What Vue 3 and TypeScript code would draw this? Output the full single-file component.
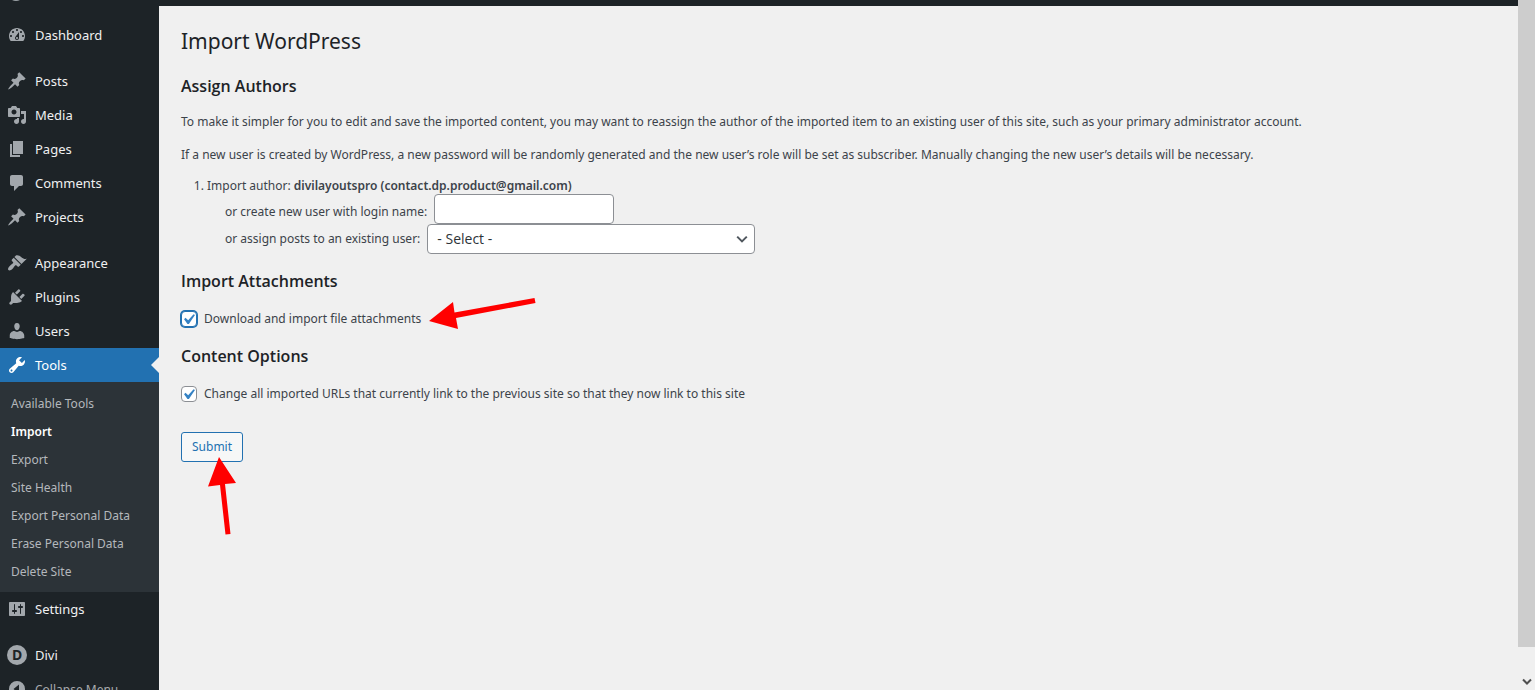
<script setup lang="ts">
import { ref } from 'vue'

interface MenuItem {
  label: string
  path?: string
  letter?: string
  gapBefore?: boolean
  current?: boolean
  children?: string[]
}

const pin =
  'M10.44 3.02l1.82-1.82 6.36 6.35-1.83 1.82c-1.05-.68-2.48-.57-3.41.36l-.75.75c-.92.93-1.04 2.35-.35 3.41l-1.83 1.82-2.41-2.41-2.8 2.79c-.42.42-3.38 2.71-3.8 2.29s1.86-3.39 2.28-3.81l2.79-2.79L4.1 9.36l1.83-1.82c1.05.69 2.48.57 3.4-.36l.75-.75c.93-.92 1.05-2.35.36-3.41z'

const menu: MenuItem[] = [
  {
    label: 'Dashboard',
    path: 'M3.76 16h12.48c1.1-1.37 1.76-3.11 1.76-5 0-4.42-3.58-8-8-8s-8 3.58-8 8c0 1.89.66 3.63 1.76 5zM10 4c.55 0 1 .45 1 1s-.45 1-1 1-1-.45-1-1 .45-1 1-1zM6 6c.55 0 1 .45 1 1s-.45 1-1 1-1-.45-1-1 .45-1 1-1zm8 0c.55 0 1 .45 1 1s-.45 1-1 1-1-.45-1-1 .45-1 1-1zm-5.37 5.55L12 7v6c0 1.1-.9 2-2 2s-2-.9-2-2c0-.57.24-1.08.63-1.45zM4 10c.55 0 1 .45 1 1s-.45 1-1 1-1-.45-1-1 .45-1 1-1zm12 0c.55 0 1 .45 1 1s-.45 1-1 1-1-.45-1-1 .45-1 1-1zm-5 3c0-.55-.45-1-1-1s-1 .45-1 1 .45 1 1 1 1-.45 1-1z',
  },
  { label: 'Posts', path: pin, gapBefore: true },
  {
    label: 'Media',
    path: 'M13 11V4c0-.55-.45-1-1-1h-1.67L9 1H5L3.67 3H2c-.55 0-1 .45-1 1v7c0 .55.45 1 1 1h10c.55 0 1-.45 1-1zM7 4.5c1.38 0 2.5 1.12 2.5 2.5S8.38 9.5 7 9.5 4.5 8.38 4.5 7 5.62 4.5 7 4.5zM14 6h5v10.5c0 1.38-1.12 2.5-2.5 2.5S14 17.88 14 16.5s1.12-2.5 2.5-2.5c.17 0 .34.02.5.05V9h-3V6zm-4 8.05V13h2v3.5c0 1.38-1.12 2.5-2.5 2.5S7 17.88 7 16.5 8.12 14 9.5 14c.17 0 .34.02.5.05z',
  },
  { label: 'Pages', path: 'M6 15V2h10v13H6zm-1 1h8v2H3V5h2v11z' },
  {
    label: 'Comments',
    path: 'M5 2h9c1.1 0 2 .9 2 2v7c0 1.1-.9 2-2 2h-2l-5 5v-5H5c-1.1 0-2-.9-2-2V4c0-1.1.9-2 2-2z',
  },
  { label: 'Projects', path: pin },
  {
    label: 'Appearance',
    gapBefore: true,
    path: 'M14.48 11.06L7.41 3.99l1.5-1.5c.5-.56 2.3-.47 3.51.32 1.21.8 1.43 1.28 2.91 2.1 1.18.64 2.45 1.26 4.45.85zm-.71.71L6.7 4.7 4.93 6.47c-.39.39-.39 1.02 0 1.41l1.06 1.06c.39.39.39 1.03 0 1.42-.6.6-1.43 1.11-2.21 1.69-.35.26-.7.53-1.01.84C1.43 14.23.4 16.08 1.4 17.07c.99 1 2.84-.03 4.18-1.36.31-.31.58-.66.85-1.02.57-.78 1.08-1.61 1.69-2.21.39-.39 1.02-.39 1.41 0l1.06 1.06c.39.39 1.02.39 1.41 0z',
  },
  {
    label: 'Plugins',
    path: 'M13.11 4.36L9.87 7.6 8 5.73l3.24-3.24c.35-.34 1.05-.2 1.56.32.52.51.66 1.21.31 1.55zm-8 1.77l.91-1.12 9.01 9.01-1.19.84c-.71.71-2.63 1.16-3.82 1.16H6.14L4.9 17.26c-.59.59-1.54.59-2.12 0-.59-.58-.59-1.53 0-2.12l1.24-1.24v-3.88c0-1.13.4-3.19 1.09-3.89zm7.26 3.97l3.24-3.24c.34-.35 1.04-.21 1.55.31.52.51.66 1.21.31 1.55l-3.24 3.25z',
  },
  {
    label: 'Users',
    path: 'M10 9.25c-2.27 0-2.73-3.44-2.73-3.44C7 4.02 7.82 2 9.97 2c2.16 0 2.98 2.02 2.71 3.81 0 0-.41 3.44-2.68 3.44zM10 11L12.72 10c2.39 0 4.52 2.33 4.52 4.53v2.49s-3.65 1.13-7.24 1.13c-3.65 0-7.24-1.13-7.24-1.13v-2.49c0-2.25 1.94-4.48 4.47-4.48z',
  },
  {
    label: 'Tools',
    current: true,
    path: 'M16.68 9.77c-1.34 1.34-3.3 1.67-4.95.99l-5.41 6.52c-.99.99-2.59.99-3.58 0s-.99-2.59 0-3.57l6.52-5.42c-.68-1.65-.35-3.61.99-4.95 1.28-1.28 3.12-1.62 4.72-1.06l-2.89 2.89 2.82 2.82 2.86-2.87c.53 1.58.18 3.39-1.08 4.65zM3.81 16.21c.4.39 1.04.39 1.43 0 .4-.4.4-1.04 0-1.43-.39-.4-1.03-.4-1.43 0-.39.39-.39 1.03 0 1.43z',
    children: [
      'Available Tools',
      'Import',
      'Export',
      'Site Health',
      'Export Personal Data',
      'Erase Personal Data',
      'Delete Site',
    ],
  },
  {
    label: 'Settings',
    path: 'M18 16V4c0-.55-.45-1-1-1H3c-.55 0-1 .45-1 1v12c0 .55.45 1 1 1h14c.55 0 1-.45 1-1zM8 11h1c.55 0 1 .45 1 1s-.45 1-1 1H8v1.5c0 .28-.22.5-.5.5s-.5-.22-.5-.5V13H6c-.55 0-1-.45-1-1s.45-1 1-1h1V5.5c0-.28.22-.5.5-.5s.5.22.5.5V11zm5-2h-1c-.55 0-1-.45-1-1s.45-1 1-1h1V5.5c0-.28.22-.5.5-.5s.5.22.5.5V7h1c.55 0 1 .45 1 1s-.45 1-1 1h-1v5.5c0 .28-.22.5-.5.5s-.5-.22-.5-.5V9z',
  },
  { label: 'Divi', letter: 'D', gapBefore: true },
]

const currentChild = 'Import'
const loginName = ref('')
const assignedUser = ref('')
const downloadAttachments = ref(true)
const rewriteUrls = ref(true)
</script>

<template>
  <div class="shell">
    <header class="adminbar"><span class="adminbar-logo"></span></header>

    <nav class="sidebar" aria-label="Main menu">
      <ul class="menu">
        <li v-for="item in menu" :key="item.label" :class="{ spaced: item.gapBefore }">
          <a href="#" class="menu-link" :class="{ current: item.current }">
            <svg v-if="item.path" class="icon" viewBox="0 0 20 20" aria-hidden="true">
              <path :d="item.path" fill-rule="evenodd" />
            </svg>
            <span v-else class="letter-icon" aria-hidden="true">{{ item.letter }}</span>
            <span>{{ item.label }}</span>
          </a>
          <ul v-if="item.children" class="submenu">
            <li v-for="child in item.children" :key="child">
              <a href="#" :class="{ active: child === currentChild }">{{ child }}</a>
            </li>
          </ul>
        </li>
        <li>
          <button type="button" class="menu-link collapse">
            <svg class="icon" viewBox="0 0 20 20" aria-hidden="true">
              <path d="M10 2a8 8 0 1 0 0 16 8 8 0 0 0 0-16zM12 14.500L6.500 10 12 5.500z" fill-rule="evenodd" />
            </svg>
            <span>Collapse Menu</span>
          </button>
        </li>
      </ul>
    </nav>

    <main class="content">
      <h1>Import WordPress</h1>
      <form @submit.prevent>
        <h2>Assign Authors</h2>
        <p>
          To make it simpler for you to edit and save the imported content, you may want to reassign the author of the
          imported item to an existing user of this site, such as your primary administrator account.
        </p>
        <p>
          If a new user is created by WordPress, a new password will be randomly generated and the new user’s role will
          be set as subscriber. Manually changing the new user’s details will be necessary.
        </p>

        <ol class="authors">
          <li>
            Import author: <strong>divilayoutspro (contact.dp.product@gmail.com)</strong>
            <div class="field field-login">
              <label for="login">or create new user with login name:</label>
              <input id="login" v-model="loginName" type="text" />
            </div>
            <div class="field">
              <label for="existing">or assign posts to an existing user:</label>
              <span class="select-wrap">
                <select id="existing" v-model="assignedUser">
                  <option value="">- Select -</option>
                </select>
                <svg class="chevron" viewBox="0 0 20 20" aria-hidden="true">
                  <path d="M4 7l6 6L16 7" />
                </svg>
              </span>
            </div>
          </li>
        </ol>

        <h2>Import Attachments</h2>
        <div class="check-row">
          <span class="box focused">
            <input id="download" v-model="downloadAttachments" type="checkbox" />
            <svg v-if="downloadAttachments" viewBox="0 0 20 20" aria-hidden="true">
              <path d="M14.830 4.890l1.340.94-5.810 8.380H9.020L5.780 9.670l1.340-1.250 2.570 2.400z" />
            </svg>
          </span>
          <label for="download">Download and import file attachments</label>
          <svg class="arrow arrow-side" viewBox="0 0 108 34" aria-hidden="true">
            <path d="M1 22L25 3l1.500 10.500L106.500-1 107.500 4 28 19l2 11z" />
          </svg>
        </div>

        <h2>Content Options</h2>
        <div class="check-row">
          <span class="box">
            <input id="rewrite" v-model="rewriteUrls" type="checkbox" />
            <svg v-if="rewriteUrls" viewBox="0 0 20 20" aria-hidden="true">
              <path d="M14.830 4.890l1.340.94-5.810 8.380H9.020L5.780 9.670l1.340-1.250 2.570 2.400z" />
            </svg>
          </span>
          <label for="rewrite"
            >Change all imported URLs that currently link to the previous site so that they now link to this site</label
          >
        </div>

        <div class="submit-row">
          <button type="submit" class="submit">Submit</button>
          <svg class="arrow arrow-up" viewBox="0 0 28 78" aria-hidden="true">
            <path d="M11 0L28 26 17 27l5.500 50-5 .5L12 28 0 29.500z" />
          </svg>
        </div>
      </form>
    </main>

    <div class="scrollbar" aria-hidden="true">
      <div class="thumb"></div>
      <svg viewBox="0 0 17 17"><path d="M5 6.500l4 4 4-4" /></svg>
    </div>
  </div>
</template>

<style>
body {
  background: #f0f0f0;
}
</style>

<style scoped>
.shell {
  display: grid;
  grid-template: 6px minmax(0, 1fr) / 159px minmax(0, 1fr) 17px;
  height: 100vh;
  overflow: hidden;
  background: #f0f0f0;
  color: #3c434a;
  font: 12px/20px 'Noto Sans', 'Open Sans', sans-serif;
}

.adminbar {
  grid-area: 1 / 1 / 2 / 3;
  overflow: hidden;
  background: #1d2327;
}

.adminbar-logo {
  display: block;
  width: 16px;
  height: 16px;
  margin: -15px 0 0 8px;
  border-radius: 50%;
  background: #9ca2a7;
}

.sidebar {
  grid-area: 2 / 1;
  overflow: hidden;
  background: #1d2327;
}

ul {
  margin: 0;
  padding: 0;
  list-style: none;
}

.menu {
  padding-top: 12px;
}

.spaced {
  margin-top: 12px;
}

.menu-link {
  position: relative;
  display: flex;
  align-items: center;
  gap: 8px;
  box-sizing: border-box;
  width: 100%;
  height: 34px;
  padding: 0 7px;
  color: #f0f0f1;
  font-size: 13px;
  text-decoration: none;
}

.menu-link.current {
  background: #2271b1;
  color: #fff;
}

.menu-link.current::after {
  content: '';
  position: absolute;
  top: 9px;
  right: 0;
  border: 8px solid transparent;
  border-left: 0;
  border-right-color: #f0f0f0;
}

.icon {
  flex: none;
  width: 20px;
  height: 20px;
  fill: #a2a7ac;
}

.current .icon {
  fill: #fff;
}

.letter-icon {
  width: 20px;
  height: 20px;
  border-radius: 50%;
  background: #a2a7ac;
  color: #1d2327;
  font-size: 14px;
  font-weight: 700;
  line-height: 20px;
  text-align: center;
}

.submenu {
  padding: 8px 0 6px;
  background: #2c3338;
}

.submenu a {
  display: block;
  padding: 4px 11px;
  color: #b4b8bc;
  text-decoration: none;
}

.submenu a.active {
  color: #fff;
  font-weight: 600;
}

.collapse {
  border: 0;
  background: none;
  color: #a7aaad;
  font-family: inherit;
  font-size: 12px;
}

.content {
  grid-area: 2 / 2;
  padding: 20px 22px;
}

h1 {
  margin: 0 0 20px;
  color: #1d2327;
  font-size: 21px;
  font-weight: 400;
  line-height: 30px;
}

h2 {
  margin: 17px 0 16px;
  color: #1d2327;
  font: 600 16px/20px 'Open Sans', 'Noto Sans', sans-serif;
}

p {
  margin: 0 0 13px;
}

.authors {
  margin: 0;
  padding: 0 0 0 26px;
  line-height: 16px;
}

strong {
  font-weight: 600;
}

.field {
  display: flex;
  align-items: center;
  gap: 7px;
  height: 30px;
  padding-left: 18px;
}

.field-login {
  align-items: flex-end;
}

.field-login label {
  line-height: 24px;
}

.field input,
.field select {
  box-sizing: border-box;
  height: 30px;
  margin: 0;
  padding: 0 9px;
  border: 1px solid #8c8f94;
  border-radius: 4px;
  background: #fff;
  color: #2c3338;
  font: 14px/28px 'Open Sans', 'Noto Sans', sans-serif;
}

.field input {
  width: 180px;
}

.select-wrap {
  position: relative;
}

.field select {
  display: block;
  width: 328px;
  appearance: none;
}

.chevron {
  position: absolute;
  top: 7px;
  right: 5px;
  width: 16px;
  height: 16px;
  fill: none;
  stroke: #50575e;
  stroke-width: 2.5;
  pointer-events: none;
}

.check-row {
  position: relative;
  display: flex;
  align-items: center;
  gap: 7px;
  width: max-content;
  margin-top: 18px;
}

.box {
  position: relative;
  width: 16px;
  height: 16px;
}

.box input {
  display: block;
  box-sizing: border-box;
  width: 16px;
  height: 16px;
  margin: 0;
  border: 1px solid #8c8f94;
  border-radius: 4px;
  background: #fff;
  appearance: none;
}

.box.focused input {
  border-color: #2271b1;
  box-shadow: 0 0 0 1px #2271b1;
}

.box svg {
  position: absolute;
  top: -2px;
  left: -3px;
  width: 21px;
  height: 21px;
  fill: #3582c4;
  pointer-events: none;
}

.arrow {
  position: absolute;
  overflow: visible;
  fill: #f00;
  pointer-events: none;
}

.arrow-side {
  top: -10px;
  left: 100%;
  width: 108px;
  height: 34px;
  margin-left: 7px;
}

.submit-row {
  position: relative;
  width: max-content;
  margin-top: 28px;
}

.submit {
  display: block;
  height: 30px;
  padding: 0 10px;
  border: 1px solid #2271b1;
  border-radius: 3px;
  background: #f6f7f7;
  color: #2271b1;
  font: inherit;
}

.arrow-up {
  top: 25px;
  left: 27px;
  width: 28px;
  height: 78px;
}

.scrollbar {
  grid-area: 1 / 3 / 3 / 4;
  display: flex;
  flex-direction: column;
  gap: 26px;
}

.thumb {
  flex: 1;
  background: #cdcdcd;
}

.scrollbar svg {
  width: 17px;
  height: 17px;
  fill: none;
  stroke: #505050;
  stroke-width: 2;
}
</style>
